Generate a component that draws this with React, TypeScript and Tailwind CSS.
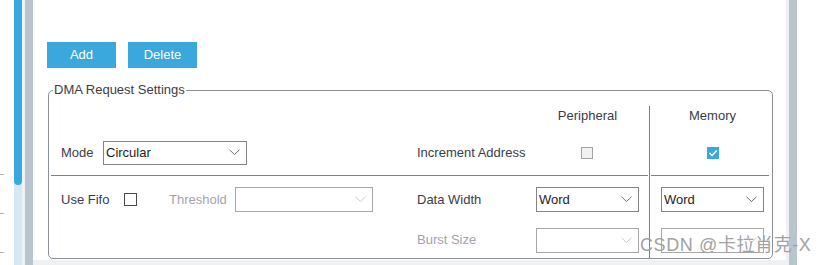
import React from 'react';

const FONT = { fontFamily: '"Liberation Sans", Arial, sans-serif' };

function Chevron({ disabled }: { disabled?: boolean }) {
  return (
    <svg width="11" height="7" viewBox="0 0 11 7" className="shrink-0">
      <polyline
        points="0.5,0.8 5.5,5.5 10.5,0.8"
        fill="none"
        stroke={disabled ? '#c9ccd1' : '#707070'}
        strokeWidth="1"
      />
    </svg>
  );
}

function Select({ value, width, height = 25, disabled }: { value?: string; width: number; height?: number; disabled?: boolean }) {
  return (
    <div
      className={`flex items-center justify-between pl-[2px] pr-[6px] border bg-white ${
        disabled ? 'border-[#a8a8a8]' : 'border-[#858585]'
      }`}
      style={{ width, height }}
    >
      <span className="text-[13px] leading-none text-[#1e1e1e]">{value}</span>
      <Chevron disabled={disabled} />
    </div>
  );
}

function Check({ checked, variant }: { checked?: boolean; variant?: 'dark' | 'light' }) {
  if (checked) {
    return (
      <div className="w-[12px] h-[12px] bg-[#3aa8dc] flex items-center justify-center">
        <svg width="10" height="8" viewBox="0 0 10 8">
          <polyline points="1.5,4 4,6.5 8.8,1.5" fill="none" stroke="#fff" strokeWidth="1.4" />
        </svg>
      </div>
    );
  }
  if (variant === 'dark') {
    return <div className="w-[13px] h-[13px] border border-[#4a4a4a] bg-white" />;
  }
  return <div className="w-[12px] h-[12px] border border-[#a3a3a3] bg-[#f1f1f1]" />;
}

export default function App() {
  return (
    <div className="relative flex w-[824px] h-[265px] overflow-hidden bg-white text-[13px] text-[#3c3c48]" style={FONT}>
      {/* left tree edge */}
      <div className="w-[14px] flex flex-col gap-[38px] pt-[174px]">
        <div className="h-px w-[4px] bg-[#b5b5b5]" />
        <div className="h-px w-[4px] bg-[#b5b5b5]" />
        <div className="h-px w-[4px] bg-[#b5b5b5]" />
      </div>
      {/* scrollbar */}
      <div className="w-[8px] bg-[#d8e7f4]">
        <div className="h-[185px] bg-[#3aa8dc] rounded-b-[4px]" />
      </div>
      <div className="w-[3px] bg-[#eef3f7]" />
      <div className="w-[8px] bg-[#b9c5cc]" />

      {/* main */}
      <div className="w-[753px] flex flex-col">
        <div className="flex-1 pl-[14px] pr-[13px] pt-[42px]">
          <div className="flex gap-[12px]">
            <button className="w-[69px] h-[26px] bg-[#3aa8dc] text-white text-[13px]">Add</button>
            <button className="w-[69px] h-[26px] bg-[#3aa8dc] text-white text-[13px]">Delete</button>
          </div>

          <div className="relative mt-[22px] ml-px w-[725px] h-[169px] border border-[#8c9097] rounded-[5px]">
            <span className="absolute -top-[8px] left-[4px] px-px bg-white leading-[14px] text-[#3c3c48]">
              DMA Request Settings
            </span>

            <div className="flex pt-[15px]">
              {/* left part */}
              <div className="w-[600px] flex flex-col">
                <div className="h-[24px] flex pt-[3px] leading-[14px]">
                  <div className="w-[487px]" />
                  <div className="w-[103px] text-center">Peripheral</div>
                </div>
                <div className="h-[45px] flex items-center pl-[12px]">
                  <div className="w-[356px] flex items-center">
                    <span className="w-[42px]">Mode</span>
                    <Select value="Circular" width={144} height={24} />
                  </div>
                  <div className="w-[119px]">Increment Address</div>
                  <div className="w-[103px] flex justify-center pr-[1px]">
                    <Check />
                  </div>
                </div>
                <div className="h-px ml-[2px] mr-px bg-[#6f80b6]" />
                <div className="h-[46px] flex items-center pl-[12px] pt-px">
                  <div className="w-[356px] flex items-center">
                    <span className="w-[63px]">Use Fifo</span>
                    <Check variant="dark" />
                    <span className="ml-[32px] w-[66px] text-[#a3a3ad]">Threshold</span>
                    <Select width={138} disabled />
                  </div>
                  <div className="w-[119px]">Data Width</div>
                  <Select value="Word" width={103} />
                </div>
                <div className="h-[36px] flex items-center pl-[12px]">
                  <div className="w-[356px]" />
                  <div className="w-[119px] text-[#a3a3ad]">Burst Size</div>
                  <Select width={103} disabled />
                </div>
              </div>

              {/* memory column */}
              <div className="flex-1 border-l border-[#6f80b6] flex flex-col">
                <div className="h-[24px] pt-[3px] pl-[11px] leading-[14px]">
                  <div className="w-[103px] text-center">Memory</div>
                </div>
                <div className="h-[45px] flex items-center pl-[11px]">
                  <div className="w-[103px] flex justify-center">
                    <Check checked />
                  </div>
                </div>
                <div className="h-px ml-px mr-[3px] bg-[#6f80b6]" />
                <div className="h-[46px] flex items-center pl-[11px] pt-px">
                  <Select value="Word" width={103} />
                </div>
                <div className="h-[36px] flex items-center pl-[11px]">
                  <Select width={103} disabled />
                </div>
              </div>
            </div>
          </div>
        </div>
        <div className="h-[5px] bg-[#eef0f2]" />
      </div>

      <div className="w-[3px] bg-[#eef0f2]" />
      <div className="w-[8px] bg-[#b9c5cc]" />
      <div className="flex-1" />

      <div
        className="absolute left-[640px] top-[233px] text-[18px] tracking-[0.6px] leading-[24px] text-[#a2a2a2] pointer-events-none"
        style={{ fontFamily: '"Liberation Sans", "Noto Sans CJK SC", sans-serif' }}
      >
        CSDN @卡拉肖克-X
      </div>
    </div>
  );
}
